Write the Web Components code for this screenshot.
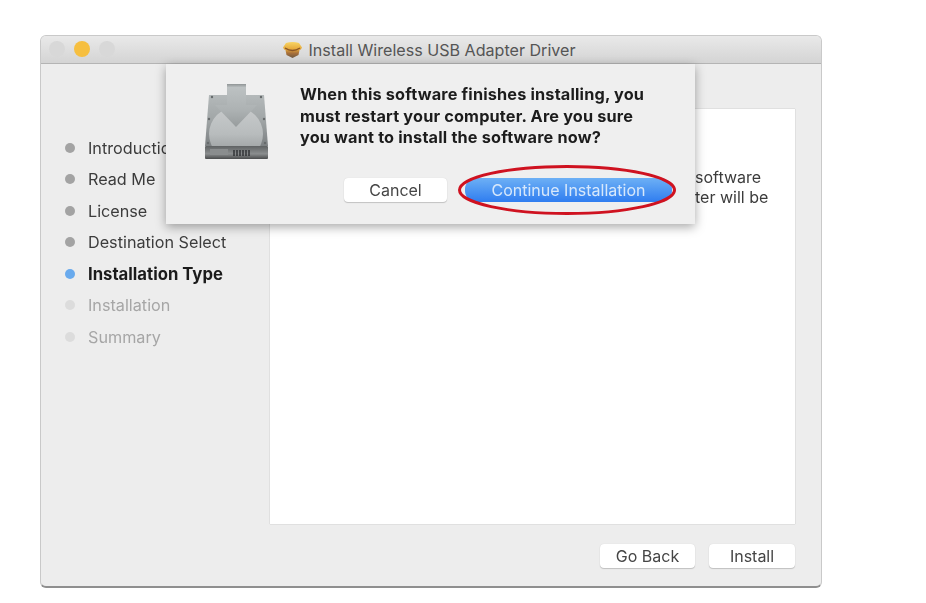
<!DOCTYPE html>
<html>
<head>
<meta charset="utf-8">
<title>Install Wireless USB Adapter Driver</title>
<style>
  html, body { margin: 0; background: #fff; }
  body { padding: 35px 0 0 40px; font-family: "Inter", "Liberation Sans", sans-serif; }
</style>
</head>
<body>
<installer-window window-title="Install Wireless USB Adapter Driver">
  <install-step state="done">Introduction</install-step>
  <install-step state="done">Read Me</install-step>
  <install-step state="done">License</install-step>
  <install-step state="done">Destination Select</install-step>
  <install-step state="current">Installation Type</install-step>
  <install-step state="todo">Installation</install-step>
  <install-step state="todo">Summary</install-step>

  <div slot="panel">software<br>ter will be</div>

  <mac-button slot="footer" style="width:95px">Go Back</mac-button>
  <mac-button slot="footer" style="width:86px">Install</mac-button>

  <alert-sheet slot="sheet">
    When this software finishes installing, you must restart your computer. Are you sure you want to install the software now?
    <mac-button slot="actions" style="width:103px">Cancel</mac-button>
    <mac-button slot="actions" primary circled style="width:207px">Continue Installation</mac-button>
  </alert-sheet>
</installer-window>

<script>
class PackageIcon extends HTMLElement {
  constructor() {
    super();
    this.attachShadow({ mode: "open" }).innerHTML = `
    <style>
      :host { display: block; width: 19px; height: 17px; }
      svg { display: block; filter: blur(0.7px); }
    </style>
    <svg width="19" height="17" viewBox="0 0 19 17">
      <defs>
        <linearGradient id="box" x1="0" y1="0" x2="0" y2="1">
          <stop offset="0" stop-color="#f8d565"/>
          <stop offset=".45" stop-color="#e5a83a"/>
          <stop offset=".7" stop-color="#a8703a"/>
          <stop offset="1" stop-color="#6f5a44"/>
        </linearGradient>
      </defs>
      <path d="M3 2 Q9.5 0 16 2 L19 6.5 Q18 9 16.5 9 L15.5 14 L9.5 17 L3.5 14 L2.5 9 Q1 9 0 6.5 Z" fill="url(#box)"/>
      <path d="M2 7 Q9.5 12 17 7" fill="none" stroke="#8a5526" stroke-width="1.4"/>
    </svg>`;
  }
}

class DiskIcon extends HTMLElement {
  constructor() {
    super();
    this.attachShadow({ mode: "open" }).innerHTML = `
    <style>
      :host { display: block; width: 64px; height: 76px; }
      svg { display: block; }
    </style>
    <svg width="64" height="76" viewBox="0 0 64 76">
      <defs>
        <linearGradient id="body" x1="0" y1="0" x2="0" y2="1">
          <stop offset="0" stop-color="#b4b9ba"/>
          <stop offset=".5" stop-color="#a0a5a6"/>
          <stop offset="1" stop-color="#7c8082"/>
        </linearGradient>
        <linearGradient id="platter" x1="0" y1="0" x2="0" y2="1">
          <stop offset="0" stop-color="#c8cbcc"/>
          <stop offset=".5" stop-color="#b8bcbd"/>
          <stop offset="1" stop-color="#8d9192"/>
        </linearGradient>
        <linearGradient id="front" x1="0" y1="0" x2="0" y2="1">
          <stop offset="0" stop-color="#5f6263"/>
          <stop offset=".6" stop-color="#8b8e8f"/>
          <stop offset="1" stop-color="#4a4c4d"/>
        </linearGradient>
        <linearGradient id="arrow" x1="0" y1="0" x2="0" y2="1">
          <stop offset="0" stop-color="#8f9495"/>
          <stop offset=".08" stop-color="#bcc1c2"/>
          <stop offset=".6" stop-color="#adb2b3"/>
          <stop offset="1" stop-color="#979c9d"/>
        </linearGradient>
        <clipPath id="bodyClip"><path d="M4 11 H59 L63 62 H0 Z"/></clipPath>
      </defs>
      <path d="M4 11 H59 L63 62 H0 Z" fill="url(#body)"/>
      <g clip-path="url(#bodyClip)">
        <circle cx="31" cy="50" r="27" fill="url(#platter)"/>
      </g>
      <path d="M22 0 H41 V21 H52 L31 43 L10 21 H22 Z" fill="url(#arrow)"/>
      <rect x="0" y="62" width="63" height="13" rx="1" fill="url(#front)"/>
      <rect x="5" y="65" width="18" height="6" fill="#8a8d8e"/>
      <path d="M29 66 V72 M32 66 V72 M35 66 V72 M38 66 V72 M41 66 V72 M44 66 V72" stroke="#1f2123" stroke-width="1.2"/>
      <g fill="#666a6b">
        <circle cx="7" cy="13" r="1.2"/><circle cx="56" cy="13" r="1.2"/>
        <circle cx="4" cy="35" r="1.2"/><circle cx="59" cy="35" r="1.2"/>
        <circle cx="3" cy="59" r="1.2"/><circle cx="60" cy="59" r="1.2"/>
      </g>
    </svg>`;
  }
}

class InstallStep extends HTMLElement {
  constructor() {
    super();
    this.attachShadow({ mode: "open" }).innerHTML = `
    <style>
      :host {
        display: flex;
        align-items: center;
        gap: 13px;
        height: 31.5px;
        font-size: 16.2px;
        color: #3c3c3c;
        white-space: nowrap;
      }
      .dot { width: 10px; height: 10px; border-radius: 50%; background: #a3a3a3; flex: none; }
      :host([state="current"]) { font-weight: 700; font-size: 16.7px; color: #1b1b1b; }
      :host([state="current"]) .dot { background: #69aaed; }
      :host([state="todo"]) { color: #a6a6a6; }
      :host([state="todo"]) .dot { background: #dcdcdc; }
    </style>
    <span class="dot"></span><slot></slot>`;
  }
}

class MacButton extends HTMLElement {
  constructor() {
    super();
    this.attachShadow({ mode: "open" }).innerHTML = `
    <style>
      :host {
        display: flex;
        position: relative;
        align-items: center;
        justify-content: center;
        box-sizing: border-box;
        height: 24px;
        border-radius: 4px;
        background: #fff;
        box-shadow: 0 1px 1px rgba(0,0,0,.18), 0 0 1px rgba(0,0,0,.14);
        font-size: 16px;
        color: #454545;
        white-space: nowrap;
      }
      :host([primary]) {
        border-radius: 12px / 11px;
        background: linear-gradient(#6db0f5, #2f7df0);
        color: #d7e8fb;
        box-shadow: none;
      }
      svg { display: none; position: absolute; left: -7px; top: -13px; }
      :host([circled]) svg { display: block; }
    </style>
    <slot></slot>
    <svg width="218" height="50" viewBox="0 0 218 50">
      <ellipse cx="109" cy="25" rx="107.5" ry="23.5" fill="none" stroke="#cf1220" stroke-width="3"/>
    </svg>`;
  }
}

class AlertSheet extends HTMLElement {
  constructor() {
    super();
    this.attachShadow({ mode: "open" }).innerHTML = `
    <style>
      :host {
        display: grid;
        grid-template-columns: 64px 1fr;
        grid-template-rows: 76px auto;
        align-content: start;
        column-gap: 31px;
        box-sizing: border-box;
        width: 529px;
        height: 160px;
        padding: 20px 22px 0 39px;
        background: #efefef;
        box-shadow: 0 3px 10px rgba(0,0,0,.35);
      }
      .msg {
        font-size: 16.3px;
        font-weight: 700;
        line-height: 21.5px;
        letter-spacing: .16px;
        color: #1c1c1c;
        padding-right: 20px;
      }
      .actions {
        grid-column: 1 / 3;
        display: flex;
        justify-content: flex-end;
        gap: 18px;
        margin: 18px 1px 0 0;
      }
    </style>
    <disk-icon></disk-icon>
    <div class="msg"><slot></slot></div>
    <div class="actions"><slot name="actions"></slot></div>`;
  }
}

class InstallerWindow extends HTMLElement {
  static get observedAttributes() {
    return ["window-title"];
  }

  constructor() {
    super();
    this.attachShadow({ mode: "open" });
  }

  connectedCallback() {
    this.render();
  }

  render() {
    this.shadowRoot.innerHTML = `
    <style>
      :host {
        display: block;
        position: relative;
        box-sizing: border-box;
        width: 782px;
        height: 553px;
        background: #ededed;
        border: 1px solid #c9c9c9;
        border-bottom: 2px solid #8f8f8f;
        border-radius: 6px;
        overflow: hidden;
        filter: blur(0.5px);
      }
      .titlebar {
        position: relative;
        display: flex;
        align-items: center;
        justify-content: center;
        gap: 6px;
        height: 27px;
        padding-right: 3px;
        background: linear-gradient(#e9e9e9, #d4d4d4);
        border-bottom: 1px solid #b4b4b4;
        font-size: 16.1px;
        color: #555;
        white-space: nowrap;
      }
      .lights { position: absolute; left: 8px; top: 5px; display: flex; gap: 9px; }
      .lights span { width: 16px; height: 16px; border-radius: 50%; background: #d8d8d8; }
      .lights span:nth-child(2) { background: #f6bf40; }
      .main {
        display: grid;
        grid-template-columns: 229px 525px;
        grid-template-rows: 415px auto;
        padding-top: 45px;
      }
      .steps { padding-top: 23px; padding-left: 24px; }
      .panel {
        box-sizing: border-box;
        background: #fff;
        box-shadow: 0 0 1px rgba(0,0,0,.3);
        padding: 58px 0 0 425px;
        font-size: 16px;
        line-height: 20px;
        color: #3c3c3c;
        white-space: nowrap;
      }
      .footer {
        grid-column: 2;
        display: flex;
        justify-content: flex-end;
        gap: 14px;
        padding-top: 20px;
      }
      .sheet { position: absolute; left: 125px; top: 28px; }
    </style>
    <div class="titlebar">
      <div class="lights"><span></span><span></span><span></span></div>
      <package-icon></package-icon>
      <span>${this.getAttribute("window-title")}</span>
    </div>
    <div class="main">
      <div class="steps"><slot></slot></div>
      <div class="panel"><slot name="panel"></slot></div>
      <div class="footer"><slot name="footer"></slot></div>
    </div>
    <div class="sheet"><slot name="sheet"></slot></div>`;
  }
}

customElements.define("package-icon", PackageIcon);
customElements.define("disk-icon", DiskIcon);
customElements.define("install-step", InstallStep);
customElements.define("mac-button", MacButton);
customElements.define("alert-sheet", AlertSheet);
customElements.define("installer-window", InstallerWindow);
</script>
</body>
</html>
